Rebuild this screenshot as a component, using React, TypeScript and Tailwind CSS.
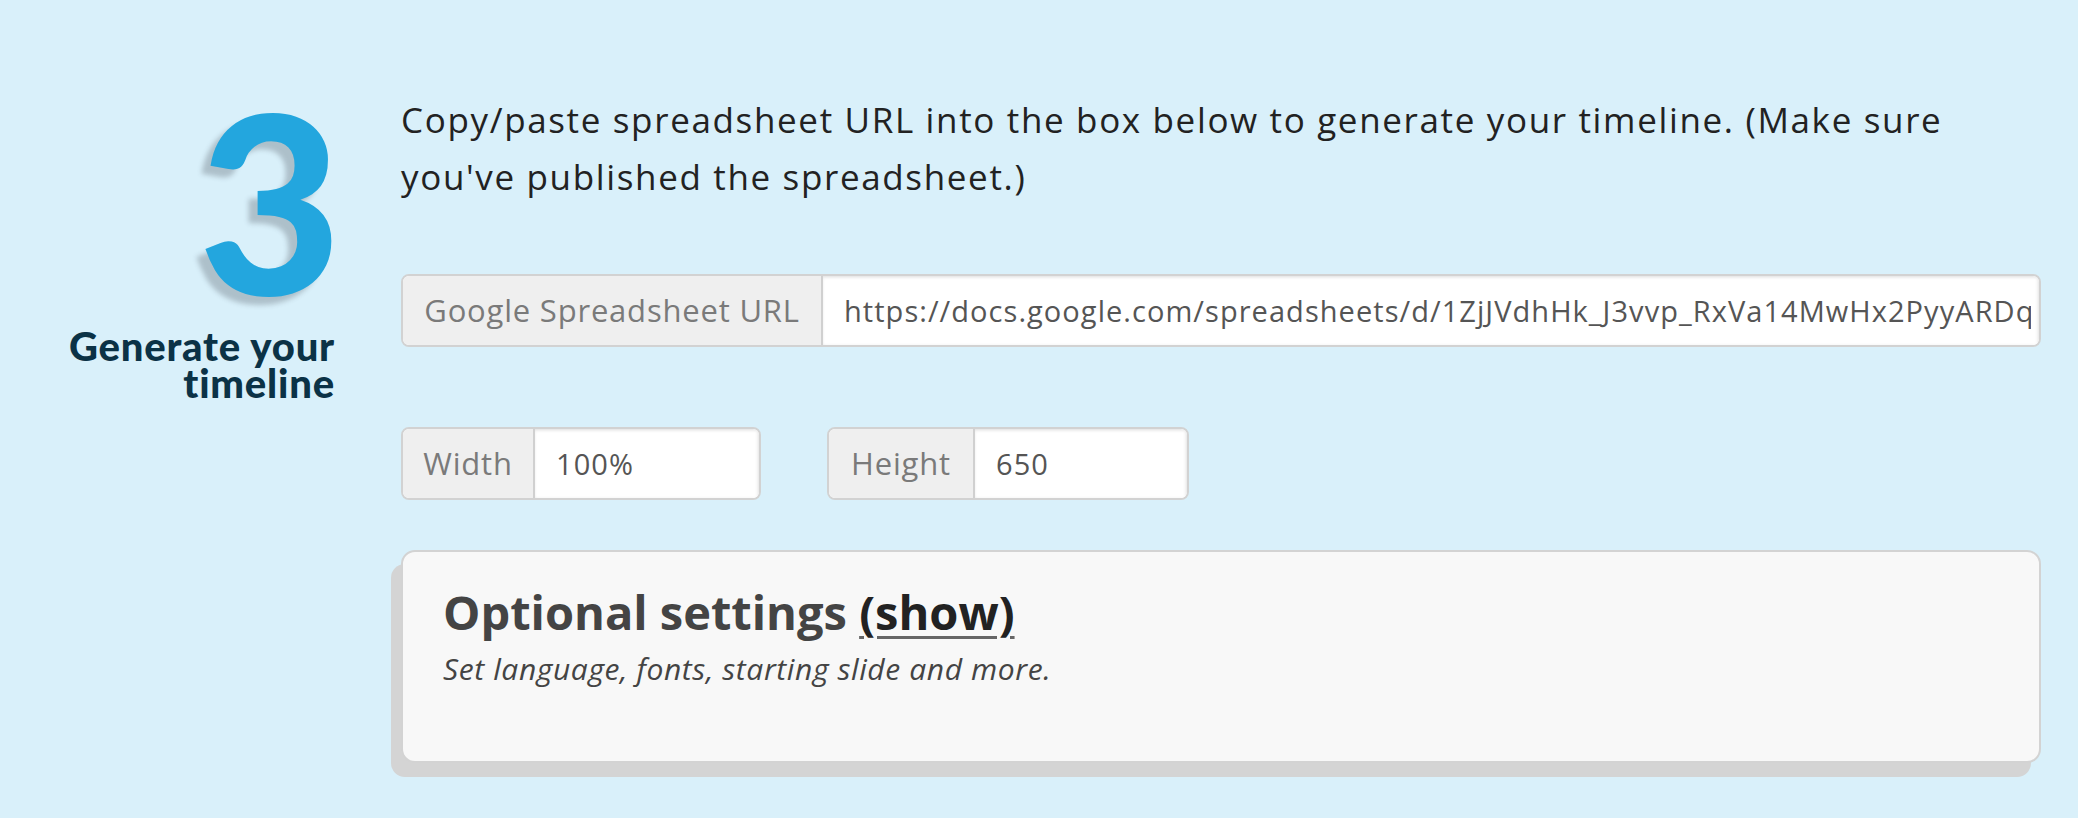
import React from "react";

function InputGroup({
  label,
  value,
  addonW,
  totalW,
}: {
  label: string;
  value: string;
  addonW: string;
  totalW: string;
}) {
  return (
    <div
      className={`flex h-[73px] ${totalW} overflow-hidden rounded-[8px] border-2 border-[#d2d2d2] bg-white`}
    >
      <div
        className={`flex ${addonW} shrink-0 items-center justify-center border-r-2 border-[#d0d0d0] bg-[#efefef] text-[31px] tracking-[0.8px] text-[#7a7a7a]`}
      >
        {label}
      </div>
      <input
        type="text"
        readOnly
        defaultValue={value}
        className="h-full min-w-0 flex-1 bg-white pl-[21px] pr-[8px] text-[29px] tracking-[1.05px] text-[#555] shadow-[inset_0_2px_3px_rgba(0,0,0,0.08),inset_-2px_0_3px_rgba(0,0,0,0.06)] outline-none"
      />
    </div>
  );
}

export default function App() {
  return (
    <div className="min-h-[818px] w-full bg-[#d9f0fa] font-['Open_Sans',sans-serif]">
      <div className="flex pr-[37px] pt-[75px]">
        {/* Left column */}
        <div className="w-[335px] shrink-0 text-right font-['Lato',sans-serif]">
          <div className="-mr-[7px] text-[248px] font-black leading-none text-[#23a6de] [text-shadow:-9px_8px_5px_rgba(60,70,80,0.28)]">
            3
          </div>
          <div className="mt-[5px] text-[40px] font-black leading-[37px] tracking-[0.8px] text-[#0b3246]">
            Generate your
            <br />
            timeline
          </div>
        </div>

        {/* Content column */}
        <div className="ml-[66px] flex min-w-0 flex-1 flex-col">
          <p className="mt-[16px] text-[35px] leading-[57px] tracking-[1.65px] text-[#222]">
            Copy/paste spreadsheet URL into the box below to generate your timeline. (Make sure
            <br />
            you've published the spreadsheet.)
          </p>

          <div className="mt-[69px]">
            <InputGroup
              label="Google Spreadsheet URL"
              value="https://docs.google.com/spreadsheets/d/1ZjJVdhHk_J3vvp_RxVa14MwHx2PyyARDqg/pubhtml"
              addonW="w-[420px]"
              totalW="w-full"
            />
          </div>

          <div className="mt-[80px] flex gap-[66px]">
            <InputGroup label="Width" value="100%" addonW="w-[132px]" totalW="w-[360px]" />
            <InputGroup label="Height" value="650" addonW="w-[146px]" totalW="w-[362px]" />
          </div>

          <div className="mt-[50px] h-[213px] rounded-[14px] border-2 border-[#d3d3d3] bg-[#f8f8f8] pl-[40px] pt-[33px] shadow-[-10px_14px_0_#d4d4d4]">
            <h2 className="text-[47px] font-bold leading-[55px] text-[#444]">
              Optional settings{" "}
              <a className="text-[#222] underline decoration-[#666] decoration-[3px] underline-offset-[6px]">
                (show)
              </a>
            </h2>
            <p className="mt-[10px] text-[30px] italic leading-[38px] tracking-[0.6px] text-[#444]">
              Set language, fonts, starting slide and more.
            </p>
          </div>
        </div>
      </div>
    </div>
  );
}
